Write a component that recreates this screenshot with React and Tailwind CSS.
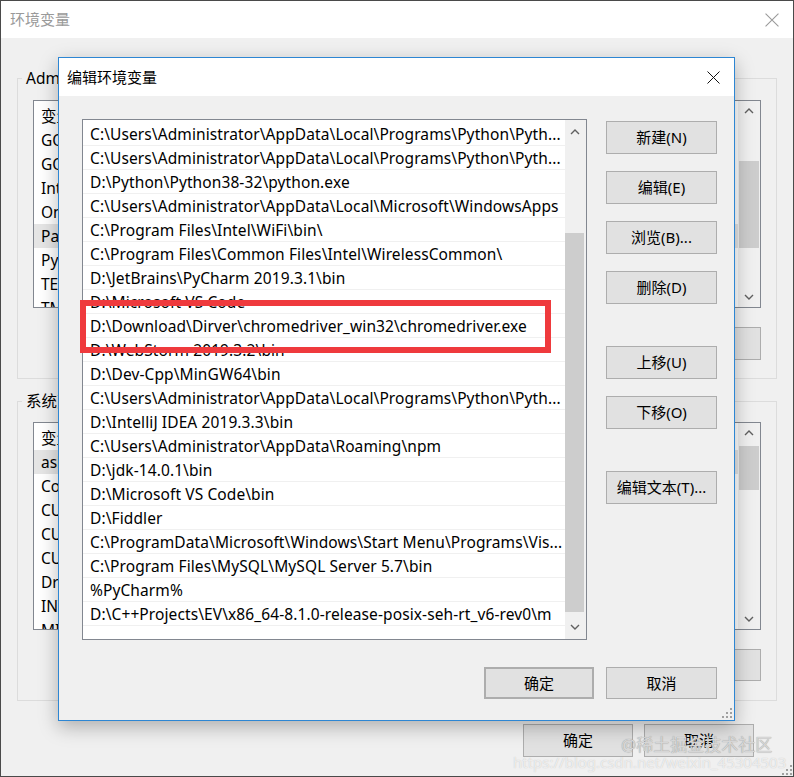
import React from 'react';

const FONT = { fontFamily: '"Noto Sans", "Noto Sans CJK SC", sans-serif' };

const pathRows = [
  'C:\\Users\\Administrator\\AppData\\Local\\Programs\\Python\\Pyth...',
  'C:\\Users\\Administrator\\AppData\\Local\\Programs\\Python\\Pyth...',
  'D:\\Python\\Python38-32\\python.exe',
  'C:\\Users\\Administrator\\AppData\\Local\\Microsoft\\WindowsApps',
  'C:\\Program Files\\Intel\\WiFi\\bin\\',
  'C:\\Program Files\\Common Files\\Intel\\WirelessCommon\\',
  'D:\\JetBrains\\PyCharm 2019.3.1\\bin',
  'D:\\Microsoft VS Code',
  'D:\\Download\\Dirver\\chromedriver_win32\\chromedriver.exe',
  'D:\\WebStorm 2019.3.2\\bin',
  'D:\\Dev-Cpp\\MinGW64\\bin',
  'C:\\Users\\Administrator\\AppData\\Local\\Programs\\Python\\Pyth...',
  'D:\\IntelliJ IDEA 2019.3.3\\bin',
  'C:\\Users\\Administrator\\AppData\\Roaming\\npm',
  'D:\\jdk-14.0.1\\bin',
  'D:\\Microsoft VS Code\\bin',
  'D:\\Fiddler',
  'C:\\ProgramData\\Microsoft\\Windows\\Start Menu\\Programs\\Vis...',
  'C:\\Program Files\\MySQL\\MySQL Server 5.7\\bin',
  '%PyCharm%',
  'D:\\C++Projects\\EV\\x86_64-8.1.0-release-posix-seh-rt_v6-rev0\\m',
];

const userVars = ['变量', 'GOBIN', 'GOPATH', 'IntelliJ IDEA', 'OneDrive', 'Path', 'PyCharm', 'TEMP', 'TMP'];
const sysVars = ['变量', 'asl.log', 'ComSpec', 'CUDA_PATH', 'CUDA_PATH_V10_1', 'CUDA_PATH_V11_0', 'DriverData', 'INTEL_DEV_REDIST', 'MIC_LD_LIBRARY_PATH'];

function Chevron({ up }) {
  return (
    <svg width="10" height="6" viewBox="0 0 10 6" className="block">
      <path d={up ? 'M1 5 L5 1 L9 5' : 'M1 1 L5 5 L9 1'} fill="none" stroke="#606060" strokeWidth="1.4" />
    </svg>
  );
}

function CloseX({ color, size = 13 }) {
  return (
    <svg width={size} height={size} viewBox="0 0 13 13">
      <path d="M0.5 0.5 L12.5 12.5 M12.5 0.5 L0.5 12.5" stroke={color} strokeWidth="1" />
    </svg>
  );
}

function Grip() {
  return (
    <svg width="10" height="10" viewBox="0 0 10 10">
      {[[8, 0], [8, 4], [4, 4], [8, 8], [4, 8], [0, 8]].map(([x, y], i) => (
        <rect key={i} x={x} y={y} width="2" height="2" fill="#a0a0a0" />
      ))}
    </svg>
  );
}

function Button({ children, className = '' }) {
  return (
    <div className={`flex items-center justify-center bg-[#e1e1e1] border border-[#adadad] text-[15px] text-black ${className}`}>
      {children}
    </div>
  );
}

function BgList({ items, selected, thumbTop, thumbH }) {
  return (
    <div className="flex h-[208px] border border-[#828790] bg-white">
      <div className="flex-1 overflow-hidden pt-[3px]">
        {items.map((v, i) => (
          <div
            key={i}
            className={`h-[24px] pl-[7px] leading-[24px] text-[15.5px] whitespace-nowrap ${i === selected ? 'bg-[#e5e5e5]' : ''}`}
          >
            {v}
          </div>
        ))}
      </div>
      <div className="w-[22px] flex flex-col items-center bg-[#f0f0f0]">
        <div className="h-[20px] flex items-center justify-center"><Chevron up /></div>
        <div className="flex-1 w-full px-[1px]">
          <div className="bg-[#cdcdcd] w-full" style={{ marginTop: thumbTop, height: thumbH }} />
        </div>
        <div className="h-[20px] flex items-center justify-center"><Chevron /></div>
      </div>
    </div>
  );
}

export default function App() {
  return (
    <div className="relative w-[794px] h-[777px] overflow-hidden bg-[#f0f0f0] border border-[#4a4a4a]" style={FONT}>
      {/* background window */}
      <div className="h-[37px] bg-white flex items-center justify-between pl-[9px] pr-[14px]">
        <span className="text-[15px] text-[#9a9a9a]">环境变量</span>
        <CloseX color="#9a9a9a" size={14} />
      </div>
      <div className="px-[16px]">
        <fieldset className="mt-[30px] border border-[#dcdcdc]">
          <legend className="ml-[4px] px-[4px] text-[15.5px] leading-[20px]">Administrator 的用户变量(U)</legend>
          <div className="px-[15px] pb-[18px]">
            <div className="mt-[12px]">
              <BgList items={userVars} selected={5} thumbTop={40} thumbH={87} />
            </div>
            <div className="mt-[19px] flex justify-end gap-[10px]">
              <Button className="w-[110px] h-[33px]">新建(N)...</Button>
              <Button className="w-[110px] h-[33px]">编辑(E)...</Button>
              <Button className="w-[110px] h-[33px]">删除(D)</Button>
            </div>
          </div>
        </fieldset>
        <fieldset className="mt-[12px] border border-[#dcdcdc]">
          <legend className="ml-[4px] px-[4px] text-[15.5px] leading-[20px]">系统变量(S)</legend>
          <div className="px-[15px] pb-[19px]">
            <div className="mt-[11px]">
              <BgList items={sysVars} selected={1} thumbTop={3} thumbH={44} />
            </div>
            <div className="mt-[19px] flex justify-end gap-[10px]">
              <Button className="w-[110px] h-[32px]">新建(W)...</Button>
              <Button className="w-[110px] h-[32px]">编辑(I)...</Button>
              <Button className="w-[110px] h-[32px]">删除(L)</Button>
            </div>
          </div>
        </fieldset>
      </div>
      <div className="mt-[23px] flex justify-end gap-[11px] pr-[39px]">
        <Button className="w-[110px] h-[33px]">确定</Button>
        <Button className="w-[110px] h-[33px]">取消</Button>
      </div>
      <div className="absolute right-[1px] bottom-[1px]"><Grip /></div>

      {/* foreground dialog */}
      <div className="absolute left-[57px] top-[56px] w-[677px] h-[664px] border border-[#2d86d3] bg-[#f0f0f0] shadow-[0_6px_18px_rgba(0,0,0,0.28)] flex flex-col">
        <div className="h-[38px] bg-white flex items-center justify-between pl-[8px] pr-[14px]">
          <span className="text-[15px] text-black">编辑环境变量</span>
          <CloseX color="#111" />
        </div>
        <div className="flex pl-[23px] pt-[23px]">
          <div className="w-[505px] h-[521px] border border-[#828790] bg-white flex">
            <div className="flex-1 pt-[2px] overflow-hidden">
              {pathRows.map((r, i) => (
                <div key={i} className="h-[24px] pl-[7px] leading-[25px] text-[15.5px] tracking-[0.1px] text-black whitespace-nowrap border-b border-[#f0f0f0]">
                  {r}
                </div>
              ))}
            </div>
            <div className="w-[21px] pr-[2px] flex flex-col bg-[#f0f0f0]">
              <div className="h-[24px] flex items-center justify-center"><Chevron up /></div>
              <div className="flex-1">
                <div className="mt-[89px] h-[379px] bg-[#cdcdcd]" />
              </div>
              <div className="h-[24px] flex items-center justify-center"><Chevron /></div>
            </div>
          </div>
          <div className="ml-[19px] pt-[2px] flex flex-col w-[111px]">
            <Button className="h-[33px]">新建(N)</Button>
            <Button className="h-[33px] mt-[17px]">编辑(E)</Button>
            <Button className="h-[33px] mt-[17px]">浏览(B)...</Button>
            <Button className="h-[33px] mt-[17px]">删除(D)</Button>
            <Button className="h-[33px] mt-[42px]">上移(U)</Button>
            <Button className="h-[33px] mt-[17px]">下移(O)</Button>
            <Button className="h-[33px] mt-[42px]">编辑文本(T)...</Button>
          </div>
        </div>
        <div className="mt-[27px] flex justify-end gap-[12px] pr-[17px]">
          <Button className="w-[110px] h-[32px] border-2 border-[#0078d7]">确定</Button>
          <Button className="w-[111px] h-[32px]">取消</Button>
        </div>
        <div className="absolute right-[2px] bottom-[2px]"><Grip /></div>
      </div>

      {/* highlight box */}
      <div className="absolute left-[79px] top-[299px] w-[471px] h-[53px] border-[6px] border-[#ef3a3d]" />

      {/* watermark */}
      <div className="absolute left-[620px] top-[731px] text-[17px] text-[#d6d6d6] [text-shadow:0_0_1px_#8a8a8a] whitespace-nowrap">
        @稀土掘金技术社区
      </div>
      <div className="absolute left-[512px] top-[750px] text-[15px] text-white/70 [text-shadow:0_0_1px_#bbbbbb] whitespace-nowrap">
        https://blog.csdn.net/weixin_45304503
      </div>
    </div>
  );
}
